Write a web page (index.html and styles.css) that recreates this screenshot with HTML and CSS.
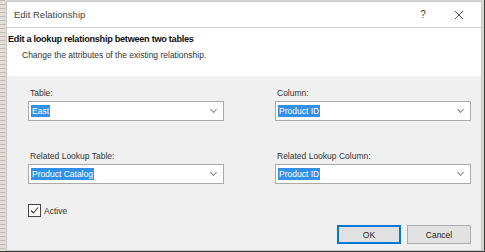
FILE: index.html
```html
<!DOCTYPE html>
<html lang="en">
<head>
    <meta charset="UTF-8">
    <title>Edit Relationship</title>
    <link rel="stylesheet" href="styles.css">
</head>
<body>
    <div class="screen">
        <div class="ruler"></div>
        <div class="dialog">
            <div class="titlebar">
                <span class="title">Edit Relationship</span>
                <span class="title-btn help">?</span>
                <span class="title-btn close">
                    <svg width="10" height="10" viewBox="0 0 10 10">
                        <path d="M1 1 L9 9 M9 1 L1 9" stroke="#444" stroke-width="0.9" fill="none"/>
                    </svg>
                </span>
            </div>
            <div class="header">
                <div class="heading">Edit a lookup relationship between two tables</div>
                <div class="subheading">Change the attributes of the existing relationship.</div>
            </div>
            <div class="body">
                <div class="fields">
                    <div class="field">
                        <label class="label">Table:</label>
                        <div class="select"><span class="value">East</span><span class="chevron"></span></div>
                    </div>
                    <div class="field">
                        <label class="label">Column:</label>
                        <div class="select"><span class="value">Product ID</span><span class="chevron"></span></div>
                    </div>
                    <div class="field">
                        <label class="label">Related Lookup Table:</label>
                        <div class="select"><span class="value">Product Catalog</span><span class="chevron"></span></div>
                    </div>
                    <div class="field">
                        <label class="label">Related Lookup Column:</label>
                        <div class="select"><span class="value">Product ID</span><span class="chevron"></span></div>
                    </div>
                </div>
                <div class="check-row">
                    <span class="checkbox">
                        <svg width="9" height="9" viewBox="0 0 9 9">
                            <path d="M1 4.5 L3.5 7 L8 1.5" stroke="#333" stroke-width="1.1" fill="none"/>
                        </svg>
                    </span>
                    <span class="check-label">Active</span>
                </div>
                <div class="buttons">
                    <button class="button primary">OK</button>
                    <button class="button">Cancel</button>
                </div>
            </div>
        </div>
    </div>
</body>
</html>
```
FILE: styles.css
```css
body {
    margin: 0;
    padding: 0;
    background-color: #3a3a3a;
    font-family: "Liberation Sans", Arial, sans-serif;
    font-size: 9px;
    color: #222;
}

.screen {
    display: flex;
    width: 484px;
    height: 251px;
    background-color: #d9d6cf;
}

.ruler {
    width: 6px;
    background: repeating-linear-gradient(to bottom, #bdbab3 0, #bdbab3 1px, #e2dfd8 1px, #e2dfd8 4px);
}

.dialog {
    flex: 1;
    display: flex;
    flex-direction: column;
    margin: 1px 2px 0 1px;
    border: 1px solid #c9c9c9;
    background-color: #f0f0f0;
}

.titlebar {
    display: flex;
    align-items: center;
    height: 25px;
    padding-left: 7px;
    background-color: #fff;
    border-bottom: 1px solid #cfcfcf;
}

.title {
    flex: 1;
    font-size: 9.5px;
    color: #444;
}

.title-btn {
    display: flex;
    justify-content: center;
    width: 36px;
    font-size: 10px;
    color: #444;
}

.close {
    margin-right: 4px;
}

.header {
    background-color: #fff;
    height: 48px;
    padding: 6px 0 0 1px;
    box-sizing: border-box;
}

.heading {
    font-weight: bold;
    font-size: 9.2px;
    letter-spacing: -0.3px;
    color: #111;
}

.subheading {
    margin-top: 6px;
    padding-left: 14px;
    font-size: 8.5px;
    color: #333;
}

.body {
    flex: 1;
    padding: 12px 10px 0 21px;
}

.fields {
    display: grid;
    grid-template-columns: 196px 196px;
    column-gap: 51px;
    row-gap: 30px;
}

.field {
    display: flex;
    flex-direction: column;
}

.label {
    font-size: 8.5px;
    color: #333;
    margin: 0 0 3px 2px;
}

.select {
    display: flex;
    align-items: center;
    height: 18px;
    border: 1px solid #a9a9a9;
    background-color: #fff;
    padding-left: 2px;
}

.value {
    margin-right: auto;
    padding: 0 1px;
    font-size: 8.5px;
    line-height: 12px;
    color: #fff;
    background-color: #3390e8;
}

.chevron {
    width: 4px;
    height: 4px;
    border-right: 1px solid #888;
    border-bottom: 1px solid #888;
    transform: rotate(45deg);
    margin: 0 7px 3px 0;
}

.check-row {
    display: flex;
    align-items: center;
    margin-top: 20px;
}

.checkbox {
    display: flex;
    align-items: center;
    justify-content: center;
    width: 11px;
    height: 11px;
    border: 1px solid #444;
    background-color: #fff;
}

.check-label {
    margin-left: 3px;
    font-size: 8.5px;
    color: #333;
}

.buttons {
    display: flex;
    justify-content: flex-end;
    gap: 6px;
    margin-top: 8px;
}

.button {
    width: 64px;
    height: 19px;
    padding: 0;
    font-family: "Liberation Sans", Arial, sans-serif;
    font-size: 8.5px;
    color: #222;
    background-color: #e1e1e1;
    border: 1px solid #adadad;
}

.primary {
    border: 2px solid #0078d7;
}
```
